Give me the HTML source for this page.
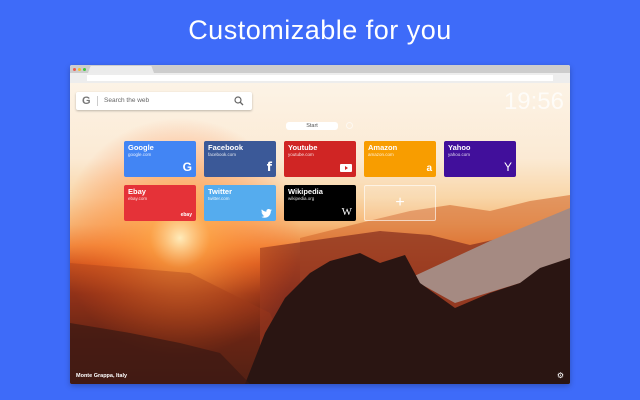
<!DOCTYPE html>
<html><head><meta charset="utf-8"><style>
*{margin:0;padding:0;box-sizing:border-box}
body{width:640px;height:400px;background:#3e6bf9;position:relative;overflow:hidden;font-family:"Liberation Sans",sans-serif}
h1{position:absolute;top:15px;left:0;width:640px;text-align:center;color:#fff;font-weight:normal;font-size:27px;letter-spacing:.5px}
.win{position:absolute;left:70px;top:65px;width:500px;height:319px;background:#fff;box-shadow:0 2px 6px rgba(0,0,0,.25);overflow:hidden;border-radius:2px}
.tabs{position:absolute;left:0;top:0;width:500px;height:8px;background:#cdcdcd}
.tab{position:absolute;left:18px;top:1px;width:66px;height:7px;background:#ececec;clip-path:polygon(4% 0,96% 0,100% 100%,0 100%)}
.dot{position:absolute;top:3px;width:3px;height:3px;border-radius:50%}
.addr{position:absolute;left:0;top:8px;width:500px;height:10px;background:#ededed}
.field{position:absolute;left:17px;top:2px;width:466px;height:6px;background:#fff}
.content{position:absolute;left:0;top:18px;width:500px;height:301px;
background:linear-gradient(180deg,#fcf3e6 0%,#fbead4 25%,#f9d6a8 38%,#f6b878 47%,#f08a40 54%,#d45a22 60%,#8a2e18 70%,#4a1a12 85%,#2a1412 100%)}
.search{position:absolute;left:6px;top:9px;width:176px;height:18px;background:#fff;border-radius:2px;box-shadow:0 1px 2px rgba(0,0,0,.25);font-size:6.5px;color:#666}
.clock{position:absolute;right:6px;top:5px;color:rgba(255,255,255,.75);font-size:24px}
.start{position:absolute;left:216px;top:39px;width:52px;height:8px;background:#fff;border-radius:3px;font-size:5.5px;text-align:center;line-height:8px;color:#555}
.t{position:absolute;width:72px;height:36px;border-radius:2px;color:#fff;padding:2px 4px}
.t b{display:block;font-size:7.5px}
.t i{display:block;font-style:normal;font-size:4.5px;opacity:.85}
.ic{position:absolute;right:4px;bottom:3px;font-weight:bold;font-size:12px;color:#fff}
.cap{position:absolute;left:6px;bottom:5px;color:#fff;font-size:5.5px;font-weight:bold}
</style></head><body>
<h1>Customizable for you</h1>
<div class="win">
<div class="tabs"><div class="dot" style="left:3px;background:#f05a50"></div><div class="dot" style="left:8px;background:#f5be2e"></div><div class="dot" style="left:13px;background:#3dc840"></div><div class="tab"></div></div>
<div class="addr"><div class="field"></div></div>
<div class="content">
<svg style="position:absolute;left:0;top:0" width="500" height="301">
<defs><radialGradient id="sun" cx="110" cy="155" r="120" gradientUnits="userSpaceOnUse"><stop offset="0" stop-color="#fff0c0" stop-opacity=".95"/><stop offset=".25" stop-color="#ffa040" stop-opacity=".7"/><stop offset="1" stop-color="#ff5a10" stop-opacity="0"/></radialGradient></defs>
<path d="M230 155 L290 140 L340 128 L380 122 L420 128 L460 118 L500 112 L500 301 L230 301Z" fill="#d46a30" opacity=".6"/>
<path d="M190 165 L260 155 L310 148 L360 152 L400 162 L500 140 L500 301 L190 301Z" fill="#8a3220" opacity=".75"/>
<path d="M340 195 L420 158 L500 125 L500 178 L450 200 L385 220Z" fill="#a58a82"/>
<rect width="500" height="301" fill="url(#sun)"/>
<path d="M0 301 L0 180 L120 190 L200 230 L230 301Z" fill="#a0381a" opacity=".35"/>
<path d="M175 301 L195 250 L215 215 L240 190 L260 178 L290 170 L310 180 L335 172 L350 200 L385 225 L420 210 L450 200 L470 185 L500 175 L500 301Z" fill="#2a1512"/>
<path d="M0 301 L0 240 L60 250 L110 260 L150 270 L180 301Z" fill="#3a1812" opacity=".7"/>
</svg>
<div class="search"><span style="position:absolute;left:6px;top:3px;font-size:11px;color:#777;font-weight:bold">G</span><span style="position:absolute;left:21px;top:4px;width:1px;height:10px;background:#ccc"></span><span style="position:absolute;left:28px;top:5px">Search the web</span>
<svg style="position:absolute;right:8px;top:4px" width="10" height="10"><circle cx="4" cy="4" r="3" fill="none" stroke="#666" stroke-width="1.2"/><path d="M6 6 L9 9" stroke="#666" stroke-width="1.3"/></svg></div>
<div class="clock">19:56</div>
<div class="start">Start</div>
<div style="position:absolute;left:276px;top:39px;width:7px;height:7px;border-radius:50%;border:1px solid rgba(255,255,255,.6)"></div>
<div class="t" style="left:54px;top:58px;background:#4285f4"><b>Google</b><i>google.com</i><span class="ic">G</span></div>
<div class="t" style="left:134px;top:58px;background:#3b5998"><b>Facebook</b><i>facebook.com</i><span class="ic" style="font-family:'DejaVu Sans'">f</span></div>
<div class="t" style="left:214px;top:58px;background:#d02524"><b>Youtube</b><i>youtube.com</i><span class="ic" style="width:12px;height:8px;background:#fff;border-radius:1px;bottom:5px"><span style="position:absolute;left:5px;top:2px;border-left:3px solid #d02524;border-top:2px solid transparent;border-bottom:2px solid transparent"></span></span></div>
<div class="t" style="left:294px;top:58px;background:#f89d00"><b>Amazon</b><i>amazon.com</i><span class="ic" style="font-size:10px">a</span></div>
<div class="t" style="left:374px;top:58px;background:#410f9b"><b>Yahoo</b><i>yahoo.com</i><span class="ic" style="font-weight:normal">Y</span></div>
<div class="t" style="left:54px;top:102px;background:#e53238"><b>Ebay</b><i>ebay.com</i><span class="ic" style="font-size:5px">ebay</span></div>
<div class="t" style="left:134px;top:102px;background:#55acee"><b>Twitter</b><i>twitter.com</i><svg class="ic" width="11" height="9" viewBox="0 0 24 20"><path fill="#fff" d="M24 2.4a10 10 0 0 1-2.8.8A5 5 0 0 0 23.3.4a10 10 0 0 1-3.1 1.2A4.9 4.9 0 0 0 11.8 6 14 14 0 0 1 1.7.9a4.9 4.9 0 0 0 1.5 6.6A4.9 4.9 0 0 1 1 6.9a4.9 4.9 0 0 0 3.9 4.8 5 5 0 0 1-2.2.1 4.9 4.9 0 0 0 4.6 3.4A9.9 9.9 0 0 1 0 17.3 14 14 0 0 0 7.5 19.5c9.1 0 14-7.5 14-14v-.6A10 10 0 0 0 24 2.4z"/></svg></div>
<div class="t" style="left:214px;top:102px;background:#000"><b>Wikipedia</b><i>wikipedia.org</i><span class="ic" style="font-family:'Liberation Serif';font-weight:normal;font-size:11px">W</span></div>
<div class="t" style="left:294px;top:102px;border:1px solid rgba(255,255,255,.6);background:rgba(255,255,255,.12);text-align:center;font-size:16px;line-height:30px">+</div>
<div class="cap">Monte Grappa, Italy</div>
<div style="position:absolute;right:6px;bottom:4px;color:#fff;font-size:8px">⚙</div>
</div></div>
</body></html>
